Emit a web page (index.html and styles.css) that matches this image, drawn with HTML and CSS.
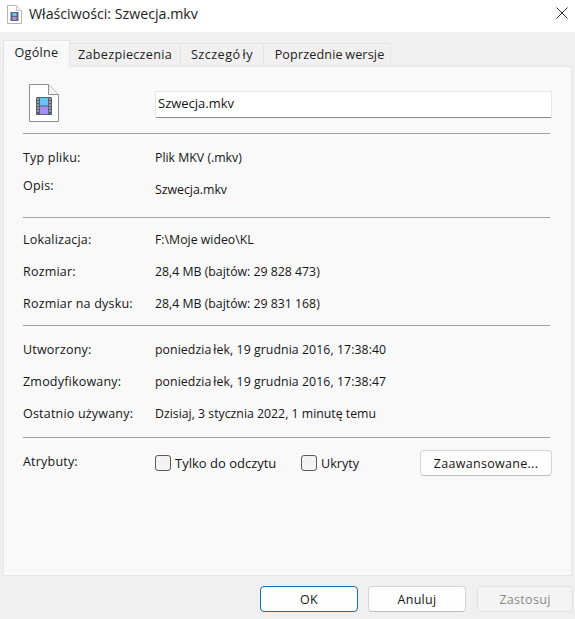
FILE: index.html
```html
<!DOCTYPE html>
<html lang="pl">
<head>
<meta charset="utf-8">
<title>Właściwości: Szwecja.mkv</title>
<link rel="stylesheet" href="styles.css">
</head>
<body>
<div class="dialog">
  <header class="titlebar">
    <svg class="title-icon" width="15" height="19" viewBox="0 0 15 19">
      <path d="M.5.5h9l5 5v13H.5z" fill="#fff" stroke="#b5b5b5"/>
      <path d="M9.5.5v5h5" fill="#f3f3f3" stroke="#c5c5c5"/>
      <rect x="3.5" y="7" width="8" height="9" fill="#5d6480"/>
      <rect x="5.5" y="8" width="4" height="3" fill="#62c3ee"/>
      <rect x="5.5" y="12" width="4" height="3" fill="#a890e8"/>
    </svg>
    <span class="title-text">Właściwości: Szwecja.mkv</span>
    <svg class="close" width="12" height="12" viewBox="0 0 12 12">
      <path d="M.5.5l11 11M11.5.5l-11 11" stroke="#333" stroke-width="1" fill="none"/>
    </svg>
  </header>
  <main class="content">
    <nav class="tabs">
      <div class="tab active">Ogólne</div>
      <div class="tab t2">Zabezpieczenia</div>
      <div class="tab t3">Szczegó<span class="gap">ł</span>y</div>
      <div class="tab t4">Poprzednie wersje</div>
    </nav>
    <section class="panel">
      <div class="head">
        <svg class="file-icon" width="30" height="38" viewBox="0 0 30 38">
          <path d="M.5.5h19l10 10v27H.5z" fill="#fff" stroke="#8e8e8e"/>
          <path d="M19.5.5v10h10" fill="#f3f3f3" stroke="#8e8e8e"/>
          <rect x="7" y="13" width="16" height="18" rx="1" fill="#5a5f70"/>
          <rect x="11" y="14" width="8" height="7.5" fill="#5fc8f5"/>
          <rect x="11" y="22.5" width="8" height="7.5" fill="#a78ff0"/>
          <path d="M8 15h2M8 18h2M8 21h2M8 24h2M8 27h2M20 15h2M20 18h2M20 21h2M20 24h2M20 27h2" stroke="#d5d8e0" stroke-width="1.2"/>
        </svg>
        <div class="name-box">Szwecja.mkv</div>
      </div>
      <hr class="rule">
      <div class="group g1">
        <div class="row h28"><span class="label up1">Typ pliku:</span><span class="value up1">Plik MKV (.mkv)</span></div>
        <div class="row h28"><span class="label up1">Opis:</span><span class="value down3">Szwecja.mkv</span></div>
      </div>
      <hr class="rule">
      <div class="group g2">
        <div class="row"><span class="label">Lokalizacja:</span><span class="value">F:\Moje wideo\KL</span></div>
        <div class="row"><span class="label">Rozmiar:</span><span class="value">28,4 MB (bajtów: 29 828 473)</span></div>
        <div class="row"><span class="label">Rozmiar na dysku:</span><span class="value">28,4 MB (bajtów: 29 831 168)</span></div>
      </div>
      <hr class="rule">
      <div class="group g3">
        <div class="row"><span class="label">Utworzony:</span><span class="value dated">poniedzia<span class="gap">ł</span>ek, 19 grudnia 2016, 17:38:40</span></div>
        <div class="row"><span class="label">Zmodyfikowany:</span><span class="value dated">poniedzia<span class="gap">ł</span>ek, 19 grudnia 2016, 17:38:47</span></div>
        <div class="row"><span class="label">Ostatnio używany:</span><span class="value">Dzisiaj, 3 stycznia 2022, 1 minutę temu</span></div>
      </div>
      <hr class="rule">
      <div class="attrs">
        <span class="label attr-label">Atrybuty:</span>
        <span class="check c1"><i class="box"></i>Tylko do odczytu</span>
        <span class="check c2"><i class="box"></i>Ukryty</span>
        <button class="btn adv">Zaawansowane...</button>
      </div>
    </section>
    <footer class="actions">
      <button class="btn ok">OK</button>
      <button class="btn cancel">Anuluj</button>
      <button class="btn apply">Zastosuj</button>
    </footer>
  </main>
</div>
</body>
</html>
```
FILE: styles.css
```css
* { box-sizing: border-box; }
html, body { margin: 0; padding: 0; }
body {
  width: 575px;
  height: 619px;
  overflow: hidden;
  font-family: "Open Sans", "Noto Sans", sans-serif;
  font-size: 12.3px;
  color: #151515;
}
.dialog { display: flex; flex-direction: column; height: 619px; background: #f0f0f0; }
.titlebar {
  height: 32px;
  flex: none;
  background: #fff;
  display: flex;
  align-items: center;
  padding: 0 6px 0 7px;
}
.title-icon { flex: none; margin-top: -4px; }
.title-text { margin-left: 7px; font-size: 14.2px; color: #1c1c1c; flex: 1; margin-top: -5px; }
.close { margin-right: 1px; margin-top: -6px; }
.content { flex: 1; display: flex; flex-direction: column; padding: 9px 3px 0 3px; }
.tabs { display: flex; align-items: flex-end; height: 25px; padding-left: 1px; position: relative; z-index: 1; }
.tab {
  height: 23px;
  line-height: 22px;
  background: #f0f0f0;
  border: 1px solid #e4e4e4;
  border-bottom: 0;
  margin-left: -1px;
  font-size: 12.6px;
  letter-spacing: 0.3px;
  text-align: center;
  color: #1c1c1c;
}
.tab.active {
  height: 27px;
  width: 67px;
  line-height: 23px;
  margin-bottom: -1px;
  background: #f9f9f9;
  padding-bottom: 3px;
}
.t2 { width: 112px; }
.t3 { width: 84px; letter-spacing: 0.5px; }
.t4 { width: 128px; padding-left: 5px; letter-spacing: 0.15px; word-spacing: -1px; }
.gap { margin-left: 2px; }
.panel {
  height: 510px;
  background: #f9f9f9;
  border: 1px solid #e6e6e6;
  padding: 0 19px;
  display: flex;
  flex-direction: column;
}
.head { height: 66px; display: flex; padding-left: 6px; padding-top: 17px; }
.file-icon { flex: none; }
.name-box {
  flex: none;
  margin-left: 96px;
  margin-top: 7px;
  width: 397px;
  height: 27px;
  background: #fff;
  border: 1px solid #e6e6e6;
  border-bottom: 1px solid #8a8a8a;
  padding: 0 2px;
  line-height: 22px;
  font-size: 13px;
  border-radius: 2px;
}
.rule { margin: 0; border: 0; border-top: 1px solid #a0a0a0; width: 527px; flex: none; }
.group { display: flex; flex-direction: column; }
.g1 { height: 83px; padding-top: 10px; }
.g2 { height: 107px; padding-top: 5px; }
.g3 { height: 111px; padding-top: 7px; }
.row { display: flex; height: 32px; align-items: center; }
.h28 { height: 28px; }
.label { width: 132px; flex: none; font-size: 12.5px; letter-spacing: 0.2px; }
.dated { letter-spacing: 0.07px; }
.up1 { margin-bottom: 2px; }
.down3 { margin-top: 6px; }
.attr-label { margin-bottom: 4px; }
.attrs { display: flex; align-items: center; height: 50px; }
.check { display: flex; align-items: center; flex: none; font-size: 13px; }
.box {
  display: block;
  flex: none;
  width: 16px;
  height: 16px;
  border: 1px solid #5a5a5a;
  border-radius: 3px;
  background: #f3f3f3;
  margin-right: 4px;
}
.c1 { width: 146px; }
.c2 { width: 119px; font-size: 12.6px; }
.btn {
  flex: none;
  font-family: inherit;
  font-size: 12.5px;
  color: #151515;
  background: #fdfdfd;
  border: 1px solid #d4d4d4;
  border-bottom-color: #bdbdbd;
  border-radius: 4px;
  padding: 0;
  letter-spacing: 0.3px;
}
.adv { width: 132px; height: 26px; }
.actions { display: flex; justify-content: flex-end; padding-top: 10px; gap: 10px; }
.ok { width: 98px; height: 26px; border: 1px solid #1a6fa8; }
.cancel { width: 98px; height: 26px; }
.apply { width: 96px; height: 26px; margin-left: 1px; margin-right: -1px; color: #8a8a8a; background: #f4f4f4; border-color: #e2e2e2; }
```
